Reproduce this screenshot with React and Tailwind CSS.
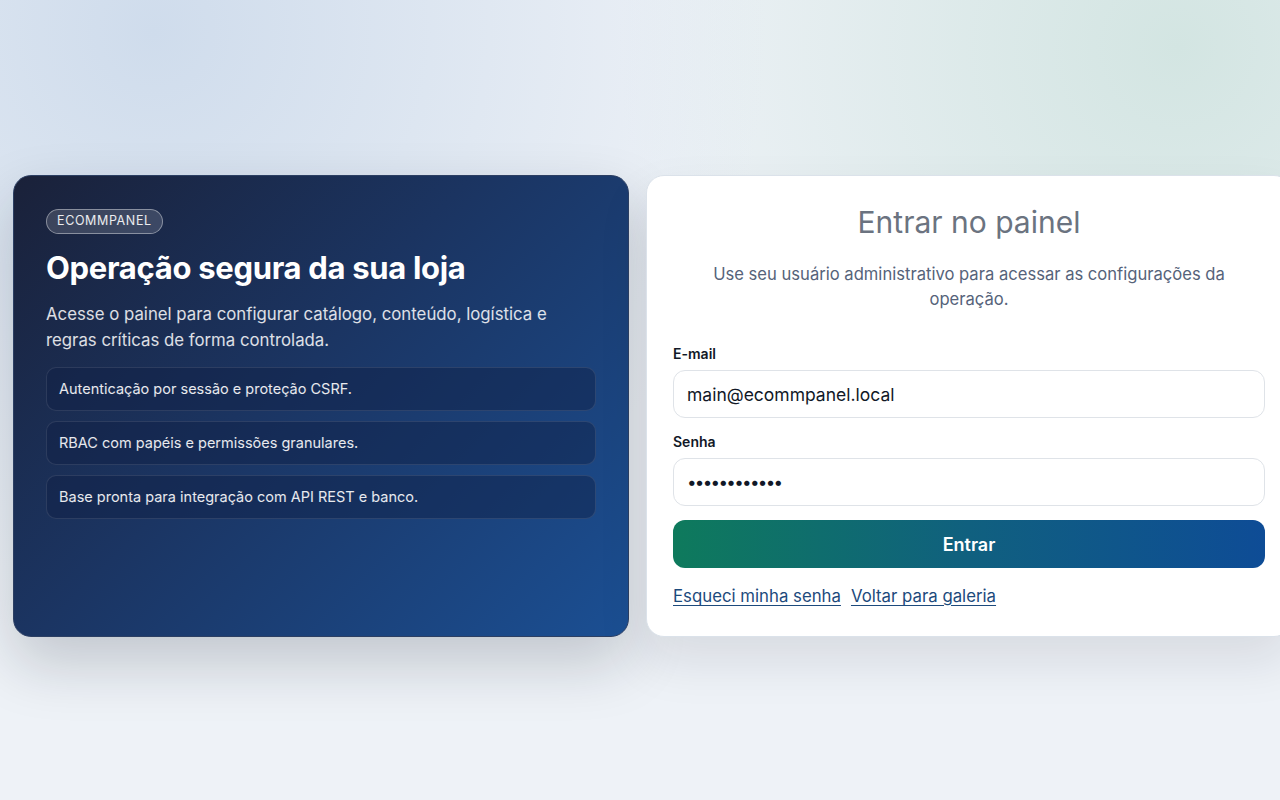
import React from "react";

const features = [
  "Autenticação por sessão e proteção CSRF.",
  "RBAC com papéis e permissões granulares.",
  "Base pronta para integração com API REST e banco.",
];

function InfoPanel() {
  return (
    <section className="w-[616px] shrink-0 h-[462px] rounded-[18px] border border-[#2c3f63] bg-[linear-gradient(135deg,#1a2139_0%,#1b3563_45%,#1b4f93_100%)] px-[32px] pt-[31px] text-white shadow-[0_26px_60px_rgba(15,23,42,0.2)]">
      <span className="inline-flex h-[25px] items-center rounded-full border border-white/40 bg-white/15 px-[10px] text-[12.5px] tracking-[0.05em] text-white/90">
        ECOMMPANEL
      </span>
      <h1 className="mt-[14px] text-[31px] font-bold leading-[40px] tracking-[-0.01em]">
        Operação segura da sua loja
      </h1>
      <p className="mt-[13px] text-[16.8px] leading-[26px] text-white/85">
        Acesse o painel para configurar catálogo, conteúdo, logística e regras
        críticas de forma controlada.
      </p>
      <ul className="mt-[14px] flex flex-col gap-[10px]">
        {features.map((item) => (
          <li
            key={item}
            className="flex h-[44px] items-center rounded-[10px] border border-white/10 bg-[#0f1f44]/45 px-[12px] text-[14.5px] text-white/90"
          >
            {item}
          </li>
        ))}
      </ul>
    </section>
  );
}

function LoginForm() {
  return (
    <section className="w-[646px] shrink-0 h-[462px] rounded-[18px] border border-[#dbe2ea] bg-white px-[26px] pt-[24px] shadow-[0_24px_50px_rgba(15,23,42,0.10)]">
      <h2 className="text-center text-[30px] leading-[44px] text-[#6b7380]">
        Entrar no painel
      </h2>
      <p className="mx-auto mt-[18px] max-w-[540px] text-center text-[16.6px] leading-[25px] text-[#56637a]">
        Use seu usuário administrativo para acessar as configurações da
        operação.
      </p>
      <form className="mt-[32px] flex flex-col" onSubmit={(e) => e.preventDefault()}>
        <label className="text-[14px] font-semibold leading-[20px] text-[#111827]">
          E-mail
        </label>
        <input
          type="email"
          defaultValue="main@ecommpanel.local"
          className="mt-[6px] h-[48px] rounded-[12px] border border-[#dfe3e8] px-[13px] text-[17.5px] text-[#111827] outline-none"
        />
        <label className="mt-[14px] text-[14px] font-semibold leading-[20px] text-[#111827]">
          Senha
        </label>
        <input
          type="password"
          defaultValue="123456789012"
          className="mt-[6px] h-[48px] rounded-[12px] border border-[#dfe3e8] px-[13px] text-[17px] tracking-[-0.1em] text-[#111827] outline-none"
        />
        <button
          type="submit"
          className="mt-[14px] h-[48px] rounded-[12px] bg-[linear-gradient(90deg,#0e7a5c_0%,#10607f_50%,#0e4c96_100%)] text-[18px] font-semibold text-white"
        >
          Entrar
        </button>
        <div className="mt-[16px] flex gap-[10px] text-[16.8px] leading-[24px] text-[#1d4a7c]">
          <a href="#" className="underline underline-offset-[3px]">
            Esqueci minha senha
          </a>
          <a href="#" className="underline underline-offset-[3px]">
            Voltar para galeria
          </a>
        </div>
      </form>
    </section>
  );
}

export default function App() {
  return (
    <div
      className="h-[800px] w-full overflow-hidden bg-[#eef2f7] bg-[radial-gradient(circle_at_12%_4%,#cfdcec_0%,rgba(207,220,236,0)_45%),radial-gradient(circle_at_92%_6%,#d3e5e2_0%,rgba(211,229,226,0)_40%)]"
      style={{ fontFamily: "Inter, 'Noto Sans', sans-serif" }}
    >
      <main className="flex gap-[17px] pl-[13px] pt-[175px]">
        <InfoPanel />
        <LoginForm />
      </main>
    </div>
  );
}
